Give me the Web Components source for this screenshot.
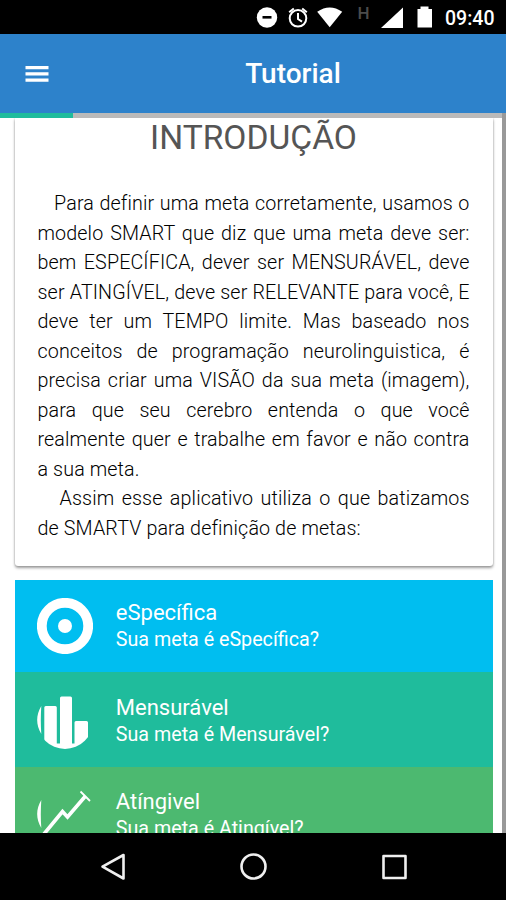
<!DOCTYPE html>
<html lang="pt-BR">
<head>
<meta charset="utf-8">
<meta name="viewport" content="width=device-width, initial-scale=1">
<title>Tutorial</title>
<style>
    html, body {
        margin: 0;
        height: 100%;
        overflow: hidden;
        background: #000;
        font-family: Roboto, "Liberation Sans", sans-serif;
    }
</style>
</head>
<body>
<tutorial-app></tutorial-app>

<script>
class StatusBar extends HTMLElement {
    constructor() {
        super();
        this.attachShadow({ mode: 'open' });
    }

    connectedCallback() {
        this.shadowRoot.innerHTML = `
            <style>
                :host {
                    display: flex;
                    justify-content: flex-end;
                    height: 34px;
                    background: #000;
                    color: #fff;
                }

                svg {
                    display: block;
                    width: 190px;
                    height: 34px;
                }

                .time {
                    width: 61px;
                    font-size: 19.5px;
                    font-weight: 500;
                    line-height: 37px;
                    white-space: nowrap;
                }
            </style>
            <svg viewBox="255 0 190 34" fill="#fff">
                <circle cx="267" cy="17.5" r="10.2"/>
                <rect x="262.5" y="16" width="9" height="2.6" fill="#000"/>
                <g fill="none" stroke="#fff" stroke-width="2">
                    <circle cx="298" cy="18.3" r="8.3"/>
                    <path d="M289.2 12.2l4.6-3.8M306.8 12.2l-4.6-3.8M298 13v6l4 2.6"/>
                </g>
                <path d="M317.2 11.8Q329.7 3 342.2 11.8L329.7 27.2Z"/>
                <path d="M403 7.5V28H381Z"/>
                <path d="M417.5 9h3V6.5h8V9h3.5v18.5h-14.5z"/>
                <text x="357.5" y="19" font-size="17" font-weight="500" fill="#4c4c4c">H</text>
            </svg>
            <span class="time">09:40</span>
        `;
    }
}

class AppHeader extends HTMLElement {
    constructor() {
        super();
        this.attachShadow({ mode: 'open' });
    }

    connectedCallback() {
        this.shadowRoot.innerHTML = `
            <style>
                :host {
                    display: grid;
                    grid-template-columns: 80px 1fr;
                    align-items: center;
                    height: 79px;
                    background: #2d82cb;
                    color: #fff;
                }

                button {
                    margin: 0 0 0 25px;
                    padding: 0;
                    border: 0;
                    width: 24px;
                    background: none;
                }

                svg {
                    display: block;
                }

                h1 {
                    margin: 0;
                    font-size: 28px;
                    font-weight: 500;
                    line-height: 34px;
                    text-align: center;
                }
            </style>
            <button aria-label="Menu">
                <svg width="24" height="18" viewBox="0 0 24 18" fill="#fff">
                    <path d="M.5 1h23v3.3H.5zM.5 7.2h23v3.3H.5zM.5 13.4h23v3.3H.5z"/>
                </svg>
            </button>
            <h1><slot></slot></h1>
        `;
    }
}

class StepProgress extends HTMLElement {
    constructor() {
        super();
        this.attachShadow({ mode: 'open' });
    }

    connectedCallback() {
        this.shadowRoot.innerHTML = `
            <style>
                :host {
                    display: block;
                    flex: none;
                    height: 5px;
                    background: #bababa;
                }

                div {
                    width: ${this.getAttribute('value')}%;
                    height: 100%;
                    background: #1fbc9c;
                }
            </style>
            <div></div>
        `;
    }
}

class IntroCard extends HTMLElement {
    constructor() {
        super();
        this.attachShadow({ mode: 'open' });
    }

    connectedCallback() {
        this.shadowRoot.innerHTML = `
            <style>
                :host {
                    display: block;
                    box-sizing: border-box;
                    height: 448px;
                    padding: 0 23.5px 0 23px;
                    border-radius: 0 0 3px 3px;
                    background: #fff;
                    box-shadow: 0 2px 3px rgba(0, 0, 0, .38), 0 0 2px rgba(0, 0, 0, .2);
                }

                h2 {
                    margin: 0 0 32px;
                    font-size: 33.6px;
                    font-weight: 400;
                    line-height: 39px;
                    text-align: center;
                    color: #555;
                }

                ::slotted(p) {
                    margin: 0;
                    font-size: 19.7px;
                    font-weight: 300;
                    line-height: 29.55px;
                    letter-spacing: .12px;
                    text-align: justify;
                    color: #000;
                }
            </style>
            <h2>${this.getAttribute('heading')}</h2>
            <slot></slot>
        `;
    }
}

// Glyphs are white cut-outs of a 56px disc
const GOAL_ICONS = {
    target: `
        <circle cx="28" cy="28" r="23.2" fill="none" stroke="#fff" stroke-width="9.8"/>
        <circle cx="28" cy="28" r="7"/>
    `,
    bars: `
        <clipPath id="disc"><circle cx="28" cy="28" r="28"/></clipPath>
        <path d="M4.3 13C-1.2 22-1.2 32 4.3 41Q3.3 28 4.3 13z"/>
        <path clip-path="url(#disc)" d="M7.3 14.5q0-1.5 1.5-1.5h9.5q1.5 0 1.5 1.5V50.5H23V5q0-1.5 1.5-1.5h9q1.5 0 1.5 1.5V50.5h2.5V29.5q0-1.5 1.5-1.5h10.5q1.5 0 1.5 1.5V56H7.3z"/>
    `,
    growth: `
        <path d="M4.3 13C-1.2 22-1.2 32 4.3 41Q3.3 28 4.3 13z"/>
        <path d="M7 47L25.500 24.500L30.500 30L48.500 9" fill="none" stroke="#fff" stroke-width="3.600"/>
        <path d="M43.500 4.500L53 14" fill="none" stroke="#fff" stroke-width="1.800"/>
    `
};

class GoalItem extends HTMLElement {
    constructor() {
        super();
        this.attachShadow({ mode: 'open' });
    }

    connectedCallback() {
        this.shadowRoot.innerHTML = `
            <style>
                :host {
                    display: flex;
                    box-sizing: border-box;
                    gap: 22.8px;
                    height: 94.5px;
                    padding: 20.7px 22.5px 0;
                    background: var(--goal-color);
                    color: #fff;
                }

                svg {
                    flex: none;
                    width: 56px;
                    height: 56px;
                }

                .label {
                    padding-top: 1px;
                }

                .name {
                    font-size: 22px;
                    line-height: 28px;
                    white-space: nowrap;
                }

                .question {
                    font-size: 19.7px;
                    line-height: 25px;
                    white-space: nowrap;
                }
            </style>
            <svg viewBox="0 0 56 56" fill="#fff">${GOAL_ICONS[this.getAttribute('icon')]}</svg>
            <div class="label">
                <div class="name"><slot name="name"></slot></div>
                <div class="question"><slot></slot></div>
            </div>
        `;
    }
}

class NavBar extends HTMLElement {
    constructor() {
        super();
        this.attachShadow({ mode: 'open' });
    }

    connectedCallback() {
        this.shadowRoot.innerHTML = `
            <style>
                :host {
                    display: flex;
                    justify-content: center;
                    align-items: center;
                    gap: 112.5px;
                    height: 67px;
                    background: #000;
                }

                svg {
                    fill: none;
                    stroke: #efefef;
                    stroke-width: 2.6;
                    stroke-linejoin: round;
                }
            </style>
            <svg width="28" height="28" viewBox="0 0 28 28"><path d="M24.5 2v23.5L3.5 13.7z"/></svg>
            <svg width="28" height="28" viewBox="0 0 28 28"><circle cx="14.5" cy="13.5" r="12"/></svg>
            <svg width="28" height="28" viewBox="0 0 28 28"><path d="M3.5 3h22v22H3.5z"/></svg>
        `;
    }
}

class TutorialApp extends HTMLElement {
    constructor() {
        super();
        this.attachShadow({ mode: 'open' });
    }

    connectedCallback() {
        this.shadowRoot.innerHTML = `
            <style>
                :host {
                    display: grid;
                    grid-template-rows: 34px 79px 1fr 67px;
                    height: 100vh;
                    min-height: 0;
                }

                main {
                    display: grid;
                    grid-template-columns: 1fr 4.5px;
                    min-height: 0;
                    overflow: hidden;
                    background: #fff;
                }

                .page {
                    display: flex;
                    flex-direction: column;
                    min-width: 0;
                    min-height: 0;
                }

                .content {
                    flex: 1;
                    min-height: 0;
                    overflow: hidden;
                    padding: 0 8.5px 0 14.5px;
                }

                .goals {
                    margin-top: 14px;
                }

                .goals goal-item:first-child {
                    height: 92.3px;
                    padding-top: 18.2px;
                }

                .scrollbar {
                    background: #999;
                }
            </style>
            <status-bar></status-bar>
            <app-header>Tutorial</app-header>
            <main>
                <div class="page">
                    <step-progress value="14.5"></step-progress>
                    <div class="content">
                        <intro-card heading="INTRODUÇÃO">
                            <p>&nbsp;&nbsp; Para definir uma meta corretamente, usamos o modelo SMART que diz que uma meta deve ser: bem ESPECÍFICA, dever ser MENSURÁVEL, deve ser ATINGÍVEL, deve ser RELEVANTE para você, E deve ter um TEMPO limite. Mas baseado nos conceitos de programação neurolinguistica, é precisa criar uma VISÃO da sua meta (imagem), para que seu cerebro entenda o que você realmente quer e trabalhe em favor e não contra a sua meta.</p>
                            <p>&nbsp;&nbsp; Assim esse aplicativo utiliza o que batizamos de SMARTV para definição de metas:</p>
                        </intro-card>
                        <div class="goals">
                            <goal-item icon="target" style="--goal-color: #00bef0">
                                <span slot="name">eSpecífica</span>Sua meta é eSpecífica?
                            </goal-item>
                            <goal-item icon="bars" style="--goal-color: #1fbc9c">
                                <span slot="name">Mensurável</span>Sua meta é Mensurável?
                            </goal-item>
                            <goal-item icon="growth" style="--goal-color: #4cb970">
                                <span slot="name">Atíngivel</span>Sua meta é Atingível?
                            </goal-item>
                        </div>
                    </div>
                </div>
                <div class="scrollbar"></div>
            </main>
            <nav-bar></nav-bar>
        `;
    }
}

customElements.define('status-bar', StatusBar);
customElements.define('app-header', AppHeader);
customElements.define('step-progress', StepProgress);
customElements.define('intro-card', IntroCard);
customElements.define('goal-item', GoalItem);
customElements.define('nav-bar', NavBar);
customElements.define('tutorial-app', TutorialApp);
</script>
</body>
</html>
